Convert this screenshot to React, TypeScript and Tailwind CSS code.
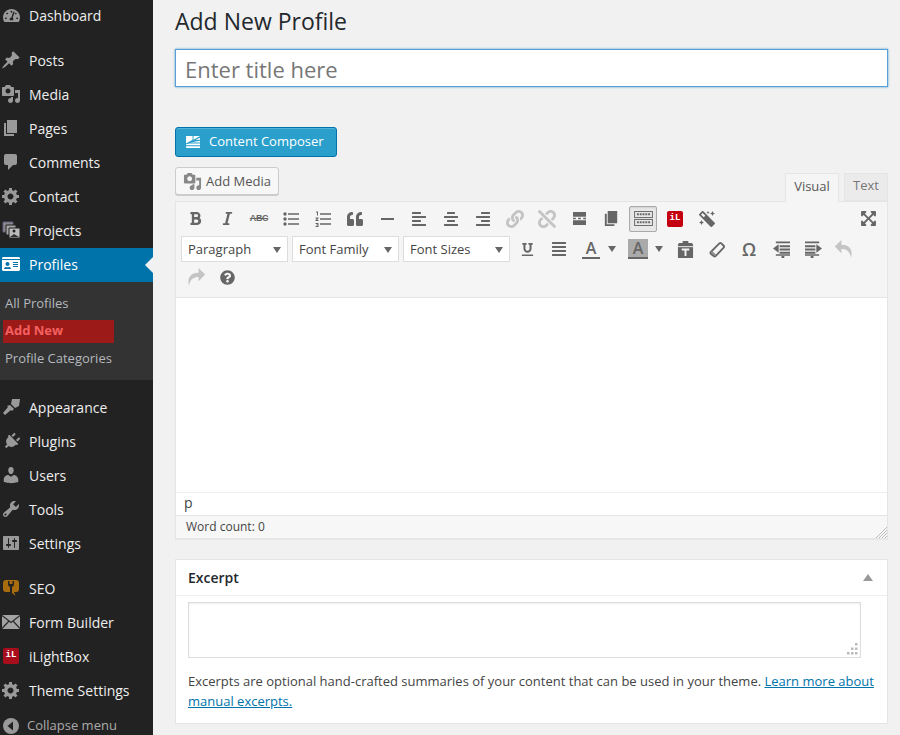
import type { ReactNode } from "react"
import {
  FaAlignCenter, FaAlignJustify, FaAlignLeft, FaAlignRight, FaBold, FaExpandArrowsAlt, FaIdCard, FaItalic,
  FaLink, FaMagic, FaPlug, FaQuestionCircle, FaQuoteLeft,
  FaTachometerAlt, FaUnderline, FaUnlink,
} from "react-icons/fa"

// dashicons-style shapes on a 20x20 grid
const PIN = "M10.440 3.020l1.820-1.820 6.360 6.350-1.830 1.820c-1.050-.68-2.480-.57-3.410.36l-.75.75c-.92.93-1.040 2.350-.35 3.410l-1.830 1.820-2.410-2.410-2.800 2.790c-.42.42-3.380 2.710-3.800 2.290s1.860-3.390 2.280-3.810l2.790-2.790L4.100 9.360l1.830-1.820c1.050.69 2.480.57 3.400-.36l.75-.75c.93-.92 1.050-2.350.36-3.410z"
const MEDIA = "M13 11V4c0-.55-.45-1-1-1h-1.670L9 1H5L3.670 3H2c-.55 0-1 .45-1 1v7c0 .55.45 1 1 1h10c.55 0 1-.45 1-1zM7 4.500c1.380 0 2.500 1.120 2.500 2.500S8.380 9.500 7 9.500 4.500 8.380 4.500 7 5.620 4.500 7 4.500zM14 6h5v10.500c0 1.380-1.120 2.500-2.500 2.500S14 17.880 14 16.500s1.120-2.500 2.500-2.500c.17 0 .34.020.5.050V9h-3V6zm-4 8.050V13h2v3.500c0 1.380-1.120 2.500-2.500 2.500S7 17.880 7 16.500 8.120 14 9.500 14c.17 0 .34.020.5.050z"
const PAGES = "M6 15V2h10v13H6zm-1 1h8v2H3V5h2v11z"
const COMMENT = "M5 2h9c1.100 0 2 .9 2 2v7c0 1.100-.9 2-2 2h-2l-5 5v-5H5c-1.100 0-2-.9-2-2V4c0-1.100.9-2 2-2z"
const GEAR = "M18 12h-2.180c-.17.7-.44 1.350-.81 1.930l1.540 1.540-2.100 2.100-1.540-1.540c-.58.36-1.230.63-1.910.79V19H8v-2.180c-.68-.16-1.330-.43-1.910-.79l-1.540 1.540-2.120-2.120 1.540-1.540c-.36-.58-.63-1.230-.79-1.910H1V9.030h2.170c.16-.7.44-1.350.8-1.940L2.430 5.550l2.100-2.100 1.540 1.540c.58-.37 1.240-.64 1.930-.81V2h3v2.180c.68.16 1.330.43 1.910.79l1.540-1.540 2.120 2.120-1.540 1.540c.36.59.64 1.240.8 1.940H18V12zm-8.500 1.500c1.660 0 3-1.340 3-3s-1.340-3-3-3-3 1.340-3 3 1.340 3 3 3z"
const USER = "M10 9.250c-2.270 0-2.730-3.440-2.730-3.440C7 4.020 7.820 2 9.970 2c2.160 0 2.980 2.020 2.710 3.810 0 0-.41 3.440-2.680 3.440zm0 2.570L12.720 10c2.390 0 4.520 2.330 4.520 4.530v2.490s-3.650 1.130-7.240 1.130c-3.650 0-7.240-1.130-7.240-1.130v-2.490c0-2.250 1.940-4.480 4.480-4.480z"
const WRENCH = "M16.680 9.770c-1.340 1.340-3.300 1.670-4.950.99l-5.410 6.520c-.99.99-2.590.99-3.580 0s-.99-2.590 0-3.570l6.520-5.420c-.68-1.650-.35-3.610.99-4.950 1.280-1.280 3.120-1.620 4.720-1.060l-2.890 2.890 2.820 2.820 2.860-2.870c.53 1.580.18 3.400-1.080 4.660zM3.810 16.210c.4.390 1.040.39 1.430 0 .4-.4.400-1.040 0-1.430-.39-.4-1.030-.4-1.430 0-.39.39-.39 1.030 0 1.430z"
const SLIDERS = "M18 16V4c0-.55-.45-1-1-1H3c-.55 0-1 .45-1 1v12c0 .55.45 1 1 1h14c.55 0 1-.45 1-1zM8 11h1c.55 0 1 .45 1 1s-.45 1-1 1H8v1.500c0 .28-.22.5-.5.5s-.5-.22-.5-.5V13H6c-.55 0-1-.45-1-1s.45-1 1-1h1V5.500c0-.28.22-.5.5-.5s.5.22.5.5V11zm5-2h-1c-.55 0-1-.45-1-1s.45-1 1-1h1V5.500c0-.28.22-.5.5-.5s.5.22.5.5V7h1c.55 0 1 .45 1 1s-.45 1-1 1h-1v5.500c0 .28-.22.5-.5.5s-.5-.22-.5-.5V9z"
const UNDO = "M7 2.500L1.500 8 7 13.500V10c4 0 6.800 1.500 8 7 1.800-6.500-1.500-10.500-8-10.500z"
const BRUSH = "M11 2l8 0-1 7-4 2-4-4zM9 8l4 4-2 2-1-1-6 5-2-2 5-6-1-1z"

function Dash({ d, className = "h-5 w-5" }: { d: string; className?: string }) {
  return (
    <svg viewBox="0 0 20 20" className={className} fill="currentColor" fillRule="evenodd">
      <path d={d} />
    </svg>
  )
}

function ProjectsIcon() {
  return (
    <svg viewBox="0 0 20 20" className="h-5 w-5">
      <path d="M2 2h10v10H2z" fill="#8a8a8a" stroke="#6b5a86" />
      <path d="M5 5h10v10H5z" fill="#a5a5a5" stroke="#222" />
      <path d="M8 8h11v10H8z" fill="#bbb" stroke="#222" />
      <circle cx="13" cy="11" r="1.500" fill="#222" />
      <path d="M9 17l4-3 5 3z" fill="#333" />
    </svg>
  )
}

function SeoIcon() {
  return (
    <svg viewBox="0 0 20 20" className="h-5 w-5">
      <path d="M5 2h10c2 0 3 1 3 3v6c0 2-1 3-3 3h-2l1.500 4L10 14H5c-2 0-3-1-3-3V5c0-2 1-3 3-3z" fill="#a96c0f" />
      <path d="M7 3v3c0 2 1 3 3 3s3-1 3-3V3l-1.500 0v3h-3V3zM9 9h2v6H9z" fill="#222" />
    </svg>
  )
}

function MailIcon() {
  return (
    <svg viewBox="0 0 18 14" className="h-[14px] w-[18px]">
      <rect width="18" height="14" fill="#a3a3a3" />
      <path d="M0 .5l9 7 9-7M0 13.500l7-7.500M18 13.500l-7-7.500" stroke="#2b2b2b" strokeWidth="1.200" fill="none" />
    </svg>
  )
}

function CollapseIcon() {
  return (
    <svg viewBox="0 0 16 16" className="h-4 w-4">
      <circle cx="8" cy="8" r="8" fill="#999" />
      <path d="M10 3.500v9L4.500 8z" fill="#222" />
    </svg>
  )
}

function PasteIcon() {
  return (
    <svg viewBox="0 0 18 18" className="h-[17px] w-[17px]">
      <path d="M6 0h6v2h4l1 2v14H1V4l1-2h4z" fill="#666" />
      <path d="M1 6h16" stroke="#f5f5f5" />
      <path d="M5 8h8v2H10v6H8v-6H5z" fill="#f5f5f5" />
    </svg>
  )
}

function EraserIcon() {
  return (
    <svg viewBox="0 0 18 18" className="h-[17px] w-[17px]" fill="none" stroke="#666" strokeWidth="2">
      <path d="M2 11.500L11 2.500a1.500 1.500 0 0 1 2 0l2.500 2.500a1.500 1.500 0 0 1 0 2L7 16a1.500 1.500 0 0 1-2 0L2 13.500a1.500 1.500 0 0 1 0-2z" />
      <path d="M2.500 11L7 15.500" stroke="#888" />
    </svg>
  )
}

function IndentIcon({ flip }: { flip?: boolean }) {
  return (
    <svg viewBox="0 0 18 18" className={`h-[17px] w-[17px] ${flip ? "-scale-x-100" : ""}`} fill="#666">
      <path d="M0 8l6-4.500v9zM3 0.500h15v2H3zM7 4.500h11v2H7zM7 8h11v2H7zM7 11.500h11v2H7zM3 14h15v1.500H3zM9 16h3v2H9z" />
    </svg>
  )
}

function BulletIcon() {
  return (
    <svg viewBox="0 0 16 16" className="h-4 w-4" fill="#666">
      <circle cx="2" cy="3" r="1.700" />
      <circle cx="2" cy="8" r="1.700" />
      <circle cx="2" cy="13" r="1.700" />
      <path d="M5 2.300h11v1.400H5zM5 7.300h11v1.400H5zM5 12.300h11v1.400H5z" />
    </svg>
  )
}

function NumberIcon() {
  return (
    <svg viewBox="0 0 16 16" className="h-4 w-4" fill="#666">
      <path d="M1 0.500h2v4H2V1.500H1zM0.500 6.500h3v1L2 9h1.500v1h-3V9L2 7.500H.5zM0.500 12h3v4h-3v-1h2v-.5h-1v-1h1V13h-2z" />
      <path d="M5 2.300h11v1.400H5zM5 7.300h11v1.400H5zM5 12.300h11v1.400H5z" />
    </svg>
  )
}

function ILogo({ className = "" }: { className?: string }) {
  return (
    <span className={`flex items-center justify-center rounded-[2px] font-['Liberation_Mono',monospace] font-bold text-white ${className}`}>
      iL
    </span>
  )
}

type MenuItem = { label: string; icon: ReactNode; gapBefore?: boolean }

const MENU: MenuItem[] = [
  { label: "Posts", icon: <Dash d={PIN} />, gapBefore: true },
  { label: "Media", icon: <Dash d={MEDIA} /> },
  { label: "Pages", icon: <Dash d={PAGES} /> },
  { label: "Comments", icon: <Dash d={COMMENT} /> },
  { label: "Contact", icon: <Dash d={GEAR} /> },
  { label: "Projects", icon: <ProjectsIcon /> },
]

const MENU_BOTTOM: MenuItem[] = [
  { label: "Appearance", icon: <Dash d={BRUSH} /> },
  { label: "Plugins", icon: <FaPlug className="h-[17px] w-[17px] rotate-45" /> },
  { label: "Users", icon: <Dash d={USER} /> },
  { label: "Tools", icon: <Dash d={WRENCH} /> },
  { label: "Settings", icon: <Dash d={SLIDERS} /> },
  { label: "SEO", icon: <SeoIcon />, gapBefore: true },
  { label: "Form Builder", icon: <MailIcon /> },
  { label: "iLightBox", icon: <ILogo className="h-4 w-4 bg-[#a80d1c] text-[9px]" /> },
  { label: "Theme Settings", icon: <Dash d={GEAR} /> },
]

function SideItem({ item }: { item: MenuItem }) {
  return (
    <>
      {item.gapBefore && <div className="h-[11px]" />}
      <div className="flex h-[34px] items-center pb-[2px] text-[14px] text-[#eee]">
        <span className="flex w-[29px] shrink-0 justify-center pr-[7px] pl-0 text-[#999]">{item.icon}</span>
        {item.label}
      </div>
    </>
  )
}

function Sidebar() {
  return (
    <aside className="w-[153px] shrink-0 bg-[#222]">
      <div className="-mt-[1px]">
        <SideItem item={{ label: "Dashboard", icon: <FaTachometerAlt className="h-[17px] w-[17px]" /> }} />
      </div>
      {MENU.map((m) => (
        <SideItem key={m.label} item={m} />
      ))}
      <div className="relative flex h-[34px] items-center bg-[#0073aa] pb-[2px] text-[14px] text-white">
        <span className="flex w-[29px] shrink-0 justify-center pr-[7px]">
          <FaIdCard className="h-[18px] w-[18px]" />
        </span>
        Profiles
        <span className="absolute top-[9px] right-0 h-0 w-0 border-y-[8px] border-r-[8px] border-y-transparent border-r-[#f1f1f1]" />
      </div>
      <div className="h-[98px] bg-[#333] pt-[8px] text-[13px] text-[#b4b9be]">
        <div className="flex h-[28px] items-center pl-[5px]">All Profiles</div>
        <div className="mt-[2px] ml-[3px] flex h-[23px] w-[111px] items-center bg-[#9c1a17] pb-[2px] pl-[2px] font-bold text-[#f46060]">Add New</div>
        <div className="mt-[1px] flex h-[28px] items-center pt-[2px] pl-[5px]">Profile Categories</div>
      </div>
      <div className="h-[11px]" />
      {MENU_BOTTOM.map((m) => (
        <SideItem key={m.label} item={m} />
      ))}
      <div className="flex h-[36px] items-center text-[13px] text-[#aaa]">
        <span className="flex w-[27px] shrink-0 justify-center pr-[5px]">
          <CollapseIcon />
        </span>
        Collapse menu
      </div>
    </aside>
  )
}

function ToolBtn({ children, active, disabled }: { children: ReactNode; active?: boolean; disabled?: boolean }) {
  return (
    <span className={`flex h-[26px] w-8 shrink-0 items-center justify-center ${disabled ? "text-[#c4c4c4]" : "text-[#666]"}`}>
      {active ? (
        <span className="flex h-[26px] w-[28px] items-center justify-center rounded-[2px] border border-[#aaa] bg-[#e8e8e8] shadow-[inset_0_1px_2px_rgba(0,0,0,0.1)]">
          {children}
        </span>
      ) : (
        children
      )}
    </span>
  )
}

function Select({ label }: { label: string }) {
  return (
    <div className="relative flex h-[26px] w-[107px] shrink-0 items-center border border-[#ddd] bg-white pt-px pl-[6px] text-[13px] text-[#444]">
      {label}
      <span className="absolute top-[10px] right-[6px] h-0 w-0 border-x-[4px] border-t-[6px] border-x-transparent border-t-[#666]" />
    </div>
  )
}

function Arrow() {
  return <span className="h-0 w-0 border-x-[4px] border-t-[6px] border-x-transparent border-t-[#666]" />
}

const ic = "h-[16px] w-[16px]"

function Editor() {
  return (
    <div className="border border-[#e5e5e5] shadow-[0_1px_1px_rgba(0,0,0,0.04)]">
      <div className="h-[96px] border-b border-[#e5e5e5] bg-[#f5f5f5]">
        <div className="flex h-[33px] items-center px-[3px]">
          <ToolBtn><FaBold className="h-[15px] w-[15px]" /></ToolBtn>
          <ToolBtn><FaItalic className="h-[15px] w-[15px]" /></ToolBtn>
          <ToolBtn>
            <span className="font-['Liberation_Sans',sans-serif] text-[9px] font-bold tracking-[-0.3px] line-through">ABC</span>
          </ToolBtn>
          <ToolBtn><BulletIcon /></ToolBtn>
          <ToolBtn><NumberIcon /></ToolBtn>
          <ToolBtn><FaQuoteLeft className={ic} /></ToolBtn>
          <ToolBtn><span className="h-[2px] w-[13px] bg-[#666]" /></ToolBtn>
          <ToolBtn><FaAlignLeft className={ic} /></ToolBtn>
          <ToolBtn><FaAlignCenter className={ic} /></ToolBtn>
          <ToolBtn><FaAlignRight className={ic} /></ToolBtn>
          <ToolBtn disabled><FaLink className="h-[18px] w-[18px]" /></ToolBtn>
          <ToolBtn disabled><FaUnlink className="h-[18px] w-[18px]" /></ToolBtn>
          <ToolBtn>
            <svg viewBox="0 0 16 14" className="h-[13px] w-[15px]" fill="#666">
              <path d="M1 0h14v5H1zM1 9h14v5H1zM1 6.300h3v1.400H1zM6.500 6.300h3v1.400h-3zM12 6.300h3v1.400h-3z" />
            </svg>
          </ToolBtn>
          <ToolBtn><Dash d={PAGES} className="h-[19px] w-[19px]" /></ToolBtn>
          <ToolBtn active>
            <svg viewBox="0 0 20 16" className="h-[15px] w-[19px]" fill="none" stroke="#666">
              <rect x="0.500" y="0.500" width="19" height="6.500" />
              <rect x="0.500" y="9" width="19" height="6.500" />
              <path d="M3 3.500h14M3 12h14" strokeWidth="2" strokeDasharray="2 1" />
            </svg>
          </ToolBtn>
          <ToolBtn><ILogo className="h-4 w-4 bg-[#c40010] text-[9px]" /></ToolBtn>
          <ToolBtn><FaMagic className={`${ic} -scale-x-100`} /></ToolBtn>
          <span className="ml-auto">
            <ToolBtn><FaExpandArrowsAlt className="h-[17px] w-[17px]" /></ToolBtn>
          </span>
        </div>
        <div className="mt-[1px] flex h-[26px] items-center pl-[5px]">
          <div className="flex gap-[4px]">
            <Select label="Paragraph" />
            <Select label="Font Family" />
            <Select label="Font Sizes" />
          </div>
          <span className="w-px" />
          <ToolBtn><FaUnderline className="h-[13px] w-[13px]" /></ToolBtn>
          <ToolBtn><FaAlignJustify className={ic} /></ToolBtn>
          <span className="flex h-[26px] w-[48px] shrink-0 items-center gap-[8px] pl-[7px] text-[#666]">
            <span className="w-[18px] border-b-2 border-[#666] text-center text-[16px] leading-[17px] font-semibold">A</span>
            <Arrow />
          </span>
          <span className="flex h-[26px] w-[46px] shrink-0 items-center gap-[7px] pl-[5px] text-[#666]">
            <span className="h-[20px] w-[20px] border-b-2 border-[#666] bg-[#aaa] text-center text-[16px] leading-[18px] font-semibold">A</span>
            <Arrow />
          </span>
          <ToolBtn><PasteIcon /></ToolBtn>
          <ToolBtn><EraserIcon /></ToolBtn>
          <ToolBtn><span className="text-[18px] font-semibold">Ω</span></ToolBtn>
          <ToolBtn><IndentIcon /></ToolBtn>
          <ToolBtn><IndentIcon flip /></ToolBtn>
          <ToolBtn disabled><Dash d={UNDO} className="h-[24px] w-[24px]" /></ToolBtn>
        </div>
        <div className="flex h-[30px] items-center pl-[3px]">
          <ToolBtn disabled><Dash d={UNDO} className="h-[24px] w-[24px] -scale-x-100" /></ToolBtn>
          <ToolBtn><FaQuestionCircle className="h-[15px] w-[15px]" /></ToolBtn>
        </div>
      </div>
      <div className="h-[194px] bg-white" />
      <div className="flex h-[23px] items-center border-t border-[#eee] bg-white pb-[3px] pl-[8px] text-[14px] text-[#444]">p</div>
      <div className="relative flex h-[23px] items-center border-t border-[#e5e5e5] bg-[#f7f7f7] pl-[10px] text-[12px] text-[#444]">
        Word count: 0
        <svg viewBox="0 0 11 11" className="absolute right-0 bottom-0 h-[11px] w-[11px]" stroke="#bbb">
          <path d="M11 0L0 11M11 3L3 11M11 6L6 11M11 9L9 11" />
        </svg>
      </div>
    </div>
  )
}

function Excerpt() {
  return (
    <div className="mt-[20px] border border-[#e5e5e5] bg-white">
      <div className="flex h-[36px] items-center justify-between border-b border-[#eee] pr-[14px] pl-[12px]">
        <span className="text-[14px] font-semibold text-[#23282d]">Excerpt</span>
        <span className="h-0 w-0 border-x-[5px] border-b-[7px] border-x-transparent border-b-[#999]" />
      </div>
      <div className="px-[12px] pt-[6px] pb-[12px]">
        <div className="relative h-[56px] w-[673px] border border-[#ddd] shadow-[inset_0_1px_2px_rgba(0,0,0,0.07)]">
          <svg viewBox="0 0 13 13" className="absolute right-[1px] bottom-[1px] h-[13px] w-[13px]" fill="#bbb">
            <path d="M9 0h2.500v2.500H9zM5 4.500h2.500V7H5zM9 4.500h2.500V7H9zM1 9h2.500v2.500H1zM5 9h2.500v2.500H5zM9 9h2.500v2.500H9z" />
          </svg>
        </div>
        <p className="mt-[13px] text-[13px] leading-[20px] text-[#444]">
          Excerpts are optional hand-crafted summaries of your content that can be used in your theme.{" "}
          <a className="text-[#0073aa] underline">Learn more about manual excerpts.</a>
        </p>
      </div>
    </div>
  )
}

export default function App() {
  return (
    <div className="flex h-[735px] w-[900px] overflow-hidden bg-[#f1f1f1] font-[family-name:'Open_Sans',sans-serif] text-[#444]">
      <Sidebar />
      <main className="min-w-0 flex-1 pr-[12px] pl-[22px]">
        <h1 className="mt-[7px] text-[23px] leading-[29px] text-[#23282d]">Add New Profile</h1>
        <input
          placeholder="Enter title here"
          className="mt-[13px] h-[38px] w-full border border-[#5b9dd9] bg-white px-[9px] pt-[2px] text-[22px] text-[#444] shadow-[0_0_2px_rgba(30,140,190,0.8)] outline-none placeholder:text-[#777]"
        />
        <div className="mt-[40px] flex h-[30px] w-[162px] items-center rounded-[3px] border border-[#0073aa] bg-[#2a9fcc] pl-[10px] text-[13px] text-white shadow-[0_1px_0_rgba(120,200,230,0.5)_inset]">
          <svg viewBox="0 0 16 14" className="mr-[8px] h-[13px] w-[15px]" fill="#fff">
            <path d="M0 0h7v4L0 8zM8 0h7L8 4zM15 2v2H10zM15 5v2H5zM0 9l4-1h11v2H0zM0 11h15v2H0z" />
          </svg>
          Content Composer
        </div>
        <div className="mt-[10px] flex items-end justify-between">
          <div className="mb-[6px] flex h-[28px] w-[104px] items-center gap-[4px] rounded-[3px] border border-[#ccc] bg-[#f7f7f7] pt-px pl-[7px] text-[13px] text-[#555] shadow-[0_1px_0_#ccc]">
            <Dash d={MEDIA} className="h-[19px] w-[19px] text-[#888]" />
            Add Media
          </div>
          <div className="-mb-px flex items-end gap-[5px] text-[13px]">
            <div className="z-10 flex h-[29px] w-[54px] items-center justify-center border border-b-0 border-[#e5e5e5] bg-[#f5f5f5] pb-[3px] text-[#555]">Visual</div>
            <div className="z-10 mb-px flex h-[28px] w-[44px] items-center justify-center border border-[#e5e5e5] bg-[#ebebeb] pb-[2px] text-[#777]">Text</div>
          </div>
        </div>
        <Editor />
        <Excerpt />
      </main>
    </div>
  )
}
